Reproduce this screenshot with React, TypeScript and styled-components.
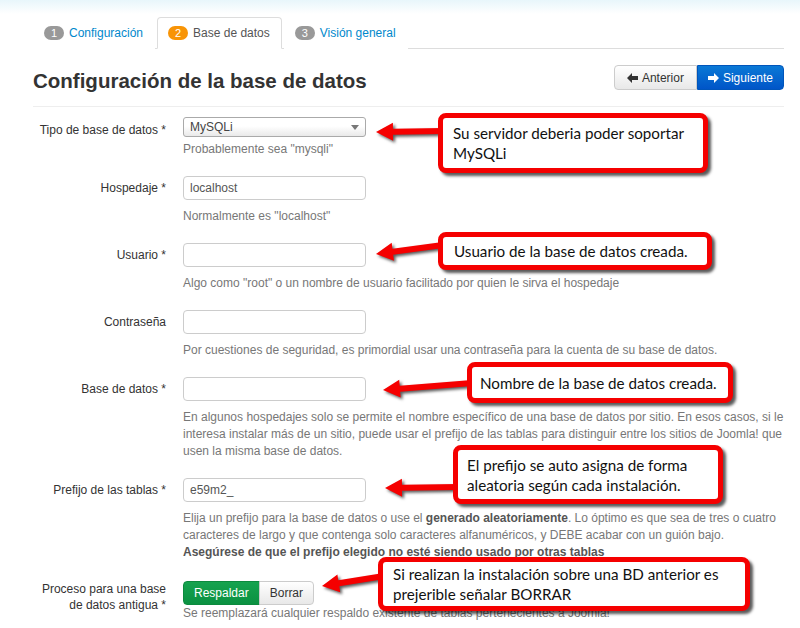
import React from 'react';
import styled, { createGlobalStyle } from 'styled-components';

const GlobalStyle = createGlobalStyle`
  html, body {
    margin: 0;
    padding: 0;
    background: linear-gradient(#e8f6fb 0px, #ffffff 14px) no-repeat;
    background-color: #fff;
  }
  body {
    font-family: 'Liberation Sans', Arial, sans-serif;
    font-size: 12px;
    color: #333;
  }
`;

type Pt = [number, number];

const arrowPoints = (tip: Pt, tail: Pt, shaft = 6, headLen = 17, headW = 18) => {
  const dx = tail[0] - tip[0];
  const dy = tail[1] - tip[1];
  const len = Math.hypot(dx, dy);
  const ux = dx / len;
  const uy = dy / len;
  const px = -uy;
  const py = ux;
  const bx = tip[0] + ux * headLen;
  const by = tip[1] + uy * headLen;
  const pts: Pt[] = [
    tip,
    [bx + (px * headW) / 2, by + (py * headW) / 2],
    [bx + (px * shaft) / 2, by + (py * shaft) / 2],
    [tail[0] + (px * shaft) / 2, tail[1] + (py * shaft) / 2],
    [tail[0] - (px * shaft) / 2, tail[1] - (py * shaft) / 2],
    [bx - (px * shaft) / 2, by - (py * shaft) / 2],
    [bx - (px * headW) / 2, by - (py * headW) / 2],
  ];
  return pts.map((p) => p.map((v) => v.toFixed(1)).join(',')).join(' ');
};

const arrows: { tip: Pt; tail: Pt }[] = [
  { tip: [376, 132], tail: [443, 131] },
  { tip: [376, 254], tail: [443, 245] },
  { tip: [383, 390], tail: [472, 383] },
  { tip: [385, 488], tail: [458, 487] },
  { tip: [322, 586], tail: [384, 576] },
];

type CalloutBox = { x: number; y: number; w: number; h: number; pl: number; text: React.ReactNode };

const callouts: CalloutBox[] = [
  { x: 438, y: 113, w: 270, h: 60, pl: 10, text: <>Su servidor deberia poder soportar<br />MySQLi</> },
  { x: 438, y: 232, w: 274, h: 38, pl: 11, text: 'Usuario de la base de datos creada.' },
  { x: 467, y: 362, w: 266, h: 41, pl: 8, text: 'Nombre de la base de datos creada.' },
  { x: 453, y: 445, w: 270, h: 59, pl: 9, text: <>El prefijo se auto asigna de forma<br />aleatoria según cada instalación.</> },
  { x: 378, y: 557, w: 372, h: 54, pl: 10, text: <>Si realizan la instalación sobre una BD anterior es<br />prejerible señalar BORRAR</> },
];

const LeftIcon = () => (
  <svg width="11" height="10" viewBox="0 0 11 10">
    <path d="M0 5 L5 0 L5 3 L11 3 L11 7 L5 7 L5 10 Z" fill="currentColor" />
  </svg>
);

const RightIcon = () => (
  <svg width="11" height="10" viewBox="0 0 11 10">
    <path d="M11 5 L6 0 L6 3 L0 3 L0 7 L6 7 L6 10 Z" fill="currentColor" />
  </svg>
);

export default function App() {
  return (
    <Page>
      <GlobalStyle />
      <Tabs>
        <Tab>
          <Badge>1</Badge>Configuración
        </Tab>
        <Tab active>
          <Badge active>2</Badge>Base de datos
        </Tab>
        <Tab>
          <Badge>3</Badge>Visión general
        </Tab>
      </Tabs>

      <HeaderRow>
        <Title>Configuración de la base de datos</Title>
        <ButtonGroup>
          <NavButton>
            <LeftIcon /> Anterior
          </NavButton>
          <NavButton primary>
            <RightIcon /> Siguiente
          </NavButton>
        </ButtonGroup>
      </HeaderRow>
      <Divider />

      <Form>
        <Row>
          <Label pt={4}>Tipo de base de datos *</Label>
          <Controls>
            <Select>
              MySQLi
              <Caret />
            </Select>
            <Help tight>Probablemente sea "mysqli"</Help>
          </Controls>
        </Row>
        <Row>
          <Label>Hospedaje *</Label>
          <Controls>
            <Input>localhost</Input>
            <Help>Normalmente es "localhost"</Help>
          </Controls>
        </Row>
        <Row>
          <Label>Usuario *</Label>
          <Controls>
            <Input />
            <Help>Algo como "root" o un nombre de usuario facilitado por quien le sirva el hospedaje</Help>
          </Controls>
        </Row>
        <Row>
          <Label>Contraseña</Label>
          <Controls>
            <Input />
            <Help>Por cuestiones de seguridad, es primordial usar una contraseña para la cuenta de su base de datos.</Help>
          </Controls>
        </Row>
        <Row>
          <Label>Base de datos *</Label>
          <Controls>
            <Input />
            <Help>
              En algunos hospedajes solo se permite el nombre específico de una base de datos por sitio. En esos casos, si le
              interesa instalar más de un sitio, puede usar el prefijo de las tablas para distinguir entre los sitios de Joomla! que
              usen la misma base de datos.
            </Help>
          </Controls>
        </Row>
        <Row gap={20}>
          <Label>Prefijo de las tablas *</Label>
          <Controls>
            <Input>e59m2_</Input>
            <Help>
              Elija un prefijo para la base de datos o use el <b>generado aleatoriamente</b>. Lo óptimo es que sea de tres o cuatro
              caracteres de largo y que contenga solo caracteres alfanuméricos, y DEBE acabar con un guión bajo.
              <br />
              <b>Asegúrese de que el prefijo elegido no esté siendo usado por otras tablas</b>
            </Help>
          </Controls>
        </Row>
        <Row>
          <Label pt={0} lh={16}>
            Proceso para una base
            <br />
            de datos antigua *
          </Label>
          <Controls>
            <Toggle>
              <ToggleButton active>Respaldar</ToggleButton>
              <ToggleButton>Borrar</ToggleButton>
            </Toggle>
            <Help flush>Se reemplazará cualquier respaldo existente de tablas pertenecientes a Joomla!</Help>
          </Controls>
        </Row>
      </Form>

      <ArrowLayer width="800" height="628" viewBox="0 0 800 628">
        {arrows.map((a, i) => (
          <polygon key={i} points={arrowPoints(a.tip, a.tail)} fill="#f50000" />
        ))}
      </ArrowLayer>
      {callouts.map((c, i) => (
        <Callout key={i} x={c.x} y={c.y} w={c.w} h={c.h} pl={c.pl}>
          <span>{c.text}</span>
        </Callout>
      ))}
    </Page>
  );
}

const Page = styled.div`
  position: relative;
  width: 800px;
  height: 628px;
  overflow: hidden;
  box-sizing: border-box;
  padding: 17px 16px 0 33px;
`;

const Tabs = styled.div`
  display: flex;
  gap: 2px;
  height: 31px;
  border-bottom: 1px solid #ddd;
`;

const Tab = styled.div<{ active?: boolean }>`
  display: flex;
  align-items: center;
  gap: 5px;
  padding: 0 11px 0 10px;
  height: 32px;
  box-sizing: border-box;
  border: 1px solid ${(p) => (p.active ? '#ddd' : 'transparent')};
  border-bottom-color: ${(p) => (p.active ? '#fff' : 'transparent')};
  border-radius: 4px 4px 0 0;
  background: #fff;
  margin-bottom: -1px;
  color: ${(p) => (p.active ? '#555' : '#0088cc')};
  font-size: 12px;
`;

const Badge = styled.span<{ active?: boolean }>`
  display: inline-block;
  min-width: 20px;
  height: 14px;
  line-height: 14px;
  border-radius: 8px;
  text-align: center;
  font-size: 11px;
  color: #fff;
  background: ${(p) => (p.active ? '#f89406' : '#999')};
`;

const HeaderRow = styled.div`
  display: flex;
  justify-content: space-between;
  align-items: flex-start;
  padding-top: 16px;
`;

const Title = styled.h1`
  margin: 4px 0 0;
  font-size: 20.5px;
  line-height: 24px;
  font-weight: bold;
  color: #333;
`;

const ButtonGroup = styled.div`
  display: flex;
`;

const NavButton = styled.div<{ primary?: boolean }>`
  display: flex;
  align-items: center;
  gap: 4px;
  height: 25px;
  box-sizing: border-box;
  padding: 0 ${(p) => (p.primary ? 10 : 12)}px;
  font-size: 12px;
  border: 1px solid ${(p) => (p.primary ? '#0055bb' : '#ccc')};
  color: ${(p) => (p.primary ? '#fff' : '#333')};
  background: ${(p) =>
    p.primary ? 'linear-gradient(#0a79d6, #0055c8)' : 'linear-gradient(#ffffff, #e8e8e8)'};
  border-radius: ${(p) => (p.primary ? '0 4px 4px 0' : '4px 0 0 4px')};
`;

const Divider = styled.hr`
  margin: 13px 0 10px;
  border: 0;
  border-top: 1px solid #eee;
`;

const Form = styled.div`
  display: flex;
  flex-direction: column;
`;

const Row = styled.div<{ gap?: number }>`
  display: grid;
  grid-template-columns: 133px 1fr;
  column-gap: 17px;
  margin-bottom: ${(p) => p.gap ?? 18}px;
`;

const Label = styled.div<{ pt?: number; lh?: number }>`
  text-align: right;
  padding-top: ${(p) => p.pt ?? 3}px;
  line-height: ${(p) => p.lh ?? 18}px;
  color: #333;
`;

const Controls = styled.div`
  display: flex;
  flex-direction: column;
  align-items: flex-start;
`;

const Select = styled.div`
  position: relative;
  width: 183px;
  height: 20px;
  box-sizing: border-box;
  padding: 0 6px;
  line-height: 18px;
  border: 1px solid #aaa;
  border-radius: 3px;
  background: linear-gradient(#ffffff 45%, #e9e9e9);
  color: #444;
`;

const Caret = styled.span`
  position: absolute;
  right: 6px;
  top: 7px;
  border-left: 4px solid transparent;
  border-right: 4px solid transparent;
  border-top: 5px solid #777;
`;

const Input = styled.div`
  width: 183px;
  height: 24px;
  box-sizing: border-box;
  padding: 0 6px;
  line-height: 22px;
  border: 1px solid #ccc;
  border-radius: 4px;
  background: #fff;
  color: #555;
`;

const Help = styled.div<{ tight?: boolean; flush?: boolean }>`
  margin-top: ${(p) => (p.tight ? 4 : p.flush ? 0 : 8)}px;
  line-height: 17px;
  color: #777;
  b {
    color: #555;
  }
`;

const Toggle = styled.div`
  display: flex;
`;

const ToggleButton = styled.div<{ active?: boolean }>`
  height: 24px;
  box-sizing: border-box;
  line-height: 22px;
  padding: 0 10px;
  border: 1px solid ${(p) => (p.active ? '#0c8a3e' : '#ccc')};
  color: ${(p) => (p.active ? '#fff' : '#333')};
  background: ${(p) => (p.active ? 'linear-gradient(#16a34f, #0b9141)' : 'linear-gradient(#ffffff, #e8e8e8)')};
  border-radius: ${(p) => (p.active ? '4px 0 0 4px' : '0 4px 4px 0')};
  & + & {
    margin-left: -1px;
  }
`;

const ArrowLayer = styled.svg`
  position: absolute;
  left: 0;
  top: 0;
  pointer-events: none;
  filter: drop-shadow(2px 2px 1.5px rgba(0, 0, 0, 0.65));
`;

const Callout = styled.div<{ x: number; y: number; w: number; h: number; pl: number }>`
  position: absolute;
  left: ${(p) => p.x}px;
  top: ${(p) => p.y}px;
  width: ${(p) => p.w}px;
  height: ${(p) => p.h}px;
  box-sizing: border-box;
  display: flex;
  align-items: center;
  padding-left: ${(p) => p.pl}px;
  border: 5px solid #f50000;
  border-radius: 8px;
  background: #fff;
  box-shadow: 3px 3px 3px rgba(0, 0, 0, 0.65);
  font-family: Lato, 'Open Sans', sans-serif;
  font-size: 15.2px;
  line-height: 20px;
  color: #111;
`;
